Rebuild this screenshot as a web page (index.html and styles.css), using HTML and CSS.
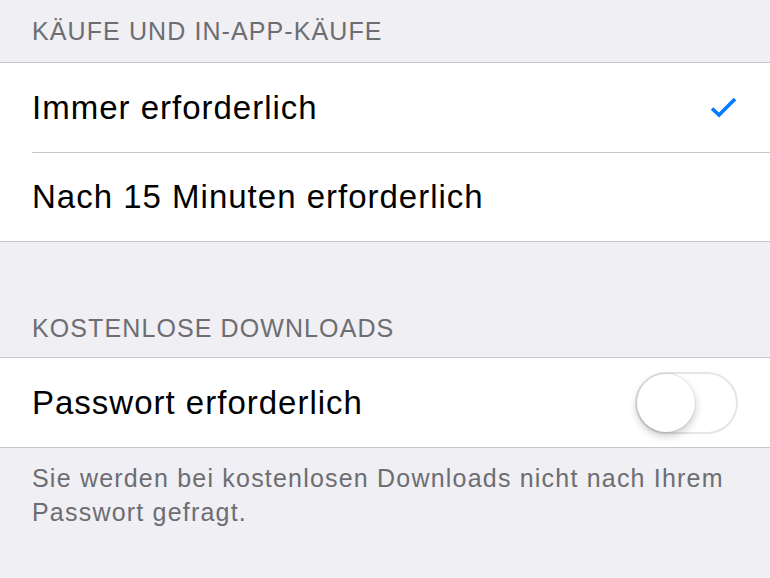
FILE: index.html
```html
<!DOCTYPE html>
<html lang="de">
<head>
<meta charset="UTF-8">
<meta name="viewport" content="width=device-width, initial-scale=1.0">
<title>Passworteinstellungen</title>
<link rel="stylesheet" href="styles.css">
</head>
<body>
<div class="settings">
    <div class="section-header first">KÄUFE UND IN-APP-KÄUFE</div>
    <div class="group">
        <div class="cell">
            <span class="label">Immer erforderlich</span>
            <svg class="check" width="30" height="22" viewBox="0 0 30 22">
                <path d="M4 11.5 L11 18 L27 2" fill="none" stroke="#007aff" stroke-width="3.6" stroke-linejoin="miter"/>
            </svg>
        </div>
        <div class="cell sep">
            <span class="label">Nach 15 Minuten erforderlich</span>
        </div>
    </div>

    <div class="section-header second">KOSTENLOSE DOWNLOADS</div>
    <div class="group">
        <div class="cell">
            <span class="label">Passwort erforderlich</span>
            <div class="switch"><div class="knob"></div></div>
        </div>
    </div>
    <div class="footer">Sie werden bei kostenlosen Downloads nicht nach Ihrem Passwort gefragt.</div>
</div>
</body>
</html>
```

FILE: styles.css
```css
body {
    margin: 0;
    background-color: #efeff4;
    font-family: "Liberation Sans", Arial, sans-serif;
}
.settings {
    width: 770px;
    min-height: 578px;
}
.section-header {
    color: #6d6d72;
    font-size: 25px;
    line-height: 30px;
    letter-spacing: 1.1px;
    padding: 0 32px;
    box-sizing: border-box;
}
.section-header.first {
    height: 62px;
    padding-top: 16px;
}
.section-header.second {
    height: 115px;
    padding-top: 71px;
}
.group {
    background-color: #fff;
    border-top: 1px solid #c8c7cc;
    border-bottom: 1px solid #c8c7cc;
}
.cell {
    height: 89px;
    box-sizing: border-box;
    margin-left: 32px;
    padding-right: 32px;
    display: flex;
    align-items: center;
    justify-content: space-between;
}
.cell.sep {
    border-top: 1px solid #c8c7cc;
}
.label {
    color: #000;
    font-size: 33px;
    line-height: 40px;
    letter-spacing: 1px;
}
.check {
    display: block;
}
.switch {
    width: 103px;
    height: 62px;
    box-sizing: border-box;
    border: 2px solid #e5e5ea;
    border-radius: 31px;
    background-color: #fff;
    position: relative;
}
.knob {
    position: absolute;
    left: 0;
    top: 0;
    width: 58px;
    height: 58px;
    border-radius: 50%;
    background-color: #fff;
    box-shadow: 0 4px 8px rgba(0, 0, 0, 0.22), 0 0 0 1px rgba(0, 0, 0, 0.06);
}
.footer {
    color: #6d6d72;
    font-size: 25px;
    line-height: 34px;
    letter-spacing: 1.2px;
    padding: 13px 32px 0;
}
```
